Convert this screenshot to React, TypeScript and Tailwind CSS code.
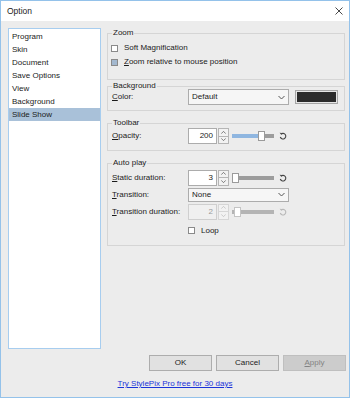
import type { ReactNode } from "react";

const pages = ["Program", "Skin", "Document", "Save Options", "View", "Background", "Slide Show"];

const ChevronDown = ({ className = "" }: { className?: string }) => (
  <svg width="7" height="5" viewBox="0 0 7 5" className={className}>
    <path d="M0.5 1 L3.5 4 L6.5 1" fill="none" stroke="currentColor" strokeWidth="1" />
  </svg>
);

const ResetIcon = ({ disabled }: { disabled?: boolean }) => (
  <svg width="8" height="8" viewBox="0 0 8 8" className={disabled ? "text-[#b8b8b8]" : "text-[#444]"}>
    <path d="M2 2.2 A2.8 2.8 0 1 1 1.3 5" fill="none" stroke="currentColor" strokeWidth="1.1" />
    <path d="M0.6 0.8 L2.9 0.9 L2.4 3.1 Z" fill="currentColor" />
  </svg>
);

function Group({ title, className, children }: { title: string; className: string; children: ReactNode }) {
  return (
    <div className={`relative border border-[#d5d5d5] ${className}`}>
      <span className="absolute -top-[7px] left-[4px] bg-[#ececec] px-[1px] leading-[12px]">{title}</span>
      {children}
    </div>
  );
}

function Check({ label, state, mn }: { label: string; state?: "mixed"; mn?: boolean }) {
  return (
    <div className="flex items-center h-[14px]">
      <span className="w-[7px] h-[7px] border border-[#8a8a8a] bg-white flex items-center justify-center">
        {state === "mixed" && <span className="w-[5px] h-[5px] bg-[#a3b8cf]" />}
      </span>
      <span className="ml-[6px]">
        {mn ? (
          <>
            <span className="underline">{label[0]}</span>
            {label.slice(1)}
          </>
        ) : (
          label
        )}
      </span>
    </div>
  );
}

function Spinner({ value, disabled }: { value: string; disabled?: boolean }) {
  return (
    <div className="flex h-[16px]">
      <div
        className={`w-[29px] h-full border flex items-center justify-end pr-[3px] ${
          disabled ? "border-[#cfcfcf] bg-[#f0f0f0] text-[#9a9a9a]" : "border-[#acacac] bg-white"
        }`}
      >
        {value}
      </div>
      <div className={`ml-[1px] w-[11px] h-full flex flex-col ${disabled ? "text-[#bcbcbc]" : "text-[#555]"}`}>
        <div className={`flex-1 border flex items-center justify-center ${disabled ? "border-[#d6d6d6]" : "border-[#b5b5b5]"} bg-[#f2f2f2]`}>
          <ChevronDown className="rotate-180 scale-75" />
        </div>
        <div className={`flex-1 border border-t-0 flex items-center justify-center ${disabled ? "border-[#d6d6d6]" : "border-[#b5b5b5]"} bg-[#f2f2f2]`}>
          <ChevronDown className="scale-75" />
        </div>
      </div>
    </div>
  );
}

function Slider({ pos, filled, disabled }: { pos: number; filled?: boolean; disabled?: boolean }) {
  return (
    <div className="relative ml-[3px] w-[42px] h-[12px] flex items-center">
      <div className="flex w-full h-[4px]">
        <div className={`h-full ${filled ? "bg-[#8fb6e0]" : disabled ? "bg-[#b4b4b4]" : "bg-[#9c9c9c]"}`} style={{ width: pos }} />
        <div className={`h-full flex-1 ${disabled ? "bg-[#b4b4b4]" : "bg-[#9c9c9c]"}`} />
      </div>
      <div
        className={`absolute top-[1px] w-[7px] h-[10px] border bg-white ${disabled ? "border-[#c4c4c4]" : "border-[#9a9a9a]"}`}
        style={{ left: pos }}
      />
    </div>
  );
}

function Combo({ value, h }: { value: string; h: string }) {
  return (
    <div className={`w-[101px] ${h} border border-[#acacac] bg-[#f6f6f6] flex items-center justify-between pl-[3px] pr-[3px]`}>
      <span>{value}</span>
      <ChevronDown className="text-[#555]" />
    </div>
  );
}

const Label = ({ text }: { text: string }) => (
  <span className="w-[76px]">
    <span className="underline">{text[0]}</span>
    {text.slice(1)}
  </span>
);

export default function App() {
  return (
    <div
      className="w-[350px] h-[398px] border border-[#94c2ea] bg-[#ececec] flex flex-col text-[8px] text-[#1b1b1b]"
      style={{ fontFamily: '"Liberation Sans", Arial, sans-serif' }}
    >
      <div className="h-[20px] bg-white flex items-center justify-between pl-[6px] pr-[6px] text-[8.5px]">
        <span>Option</span>
        <svg width="8" height="8" viewBox="0 0 8 8" className="text-[#333]">
          <path d="M0.5 0.5 L7.5 7.5 M7.5 0.5 L0.5 7.5" stroke="currentColor" strokeWidth="0.9" />
        </svg>
      </div>

      <div className="flex pl-[7px] pt-[7px] gap-[6px]">
        <div className="w-[93px] h-[321px] border border-[#a7cdef] bg-white pt-[1px]">
          {pages.map((p) => (
            <div
              key={p}
              className={`h-[13px] pl-[3px] flex items-center ${p === "Slide Show" ? "bg-[#a9c1d9]" : ""}`}
            >
              {p}
            </div>
          ))}
        </div>

        <div className="w-[238px] pt-[5px] flex flex-col">
          <Group title="Zoom" className="h-[47px] pt-[7px] pl-[3px]">
            <Check label="Soft Magnification" />
            <Check label="Zoom relative to mouse position" state="mixed" mn />
          </Group>

          <Group title="Background" className="mt-[6px] h-[25px] pt-[2px] pl-[4px]">
            <div className="flex items-center">
              <Label text="Color:" />
              <Combo value="Default" h="h-[16px]" />
              <div className="ml-[6px] w-[43px] h-[14px] border border-[#a5a5a5] bg-[#e6e6e6] p-[1px]">
                <div className="w-full h-full bg-[#2b2b2b]" />
              </div>
            </div>
          </Group>

          <Group title="Toolbar" className="mt-[12px] h-[28px] pt-[4px] pl-[4px]">
            <div className="flex items-center h-[16px]">
              <Label text="Opacity:" />
              <Spinner value="200" />
              <Slider pos={26} filled />
              <span className="ml-[5px] flex">
                <ResetIcon />
              </span>
            </div>
          </Group>

          <Group title="Auto play" className="mt-[12px] h-[83px] pt-[5px] pl-[4px]">
            <div className="flex items-center h-[17px]">
              <Label text="Static duration:" />
              <Spinner value="3" />
              <Slider pos={0} />
              <span className="ml-[5px] flex">
                <ResetIcon />
              </span>
            </div>
            <div className="flex items-center h-[17px]">
              <Label text="Transition:" />
              <Combo value="None" h="h-[14px]" />
            </div>
            <div className="flex items-center h-[17px]">
              <Label text="Transition duration:" />
              <Spinner value="2" disabled />
              <Slider pos={2} disabled />
              <span className="ml-[5px] flex">
                <ResetIcon disabled />
              </span>
            </div>
            <div className="flex items-center h-[17px] mt-[2px] pl-[76px]">
              <Check label="Loop" />
            </div>
          </Group>
        </div>
      </div>

      <div className="mt-[6px] flex justify-end gap-[4px] pr-[3px]">
        <button className="w-[63px] h-[16px] border border-[#adadad] bg-[#e1e1e1]">OK</button>
        <button className="w-[63px] h-[16px] border border-[#adadad] bg-[#e1e1e1]">Cancel</button>
        <button className="w-[63px] h-[16px] border border-[#bfbfbf] bg-[#cccccc] text-[#838383]">
          <span className="underline">A</span>pply
        </button>
      </div>

      <div className="mt-[7px] flex justify-center">
        <span className="text-[#1a33d9] underline leading-[12px]">Try StylePix Pro free for 30 days</span>
      </div>
    </div>
  );
}
